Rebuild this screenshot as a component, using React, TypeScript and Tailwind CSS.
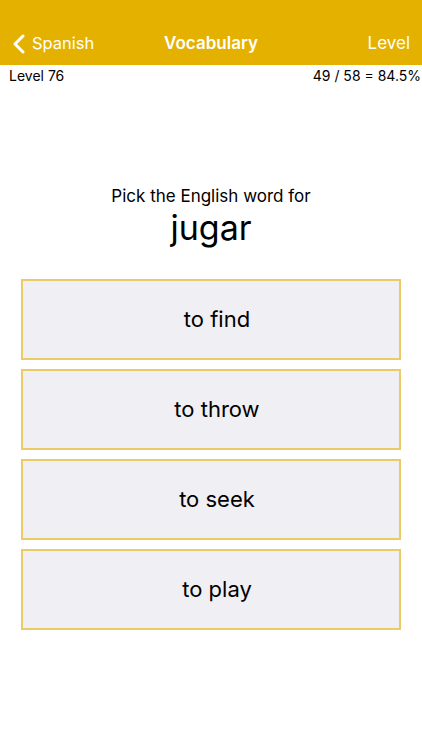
import React from 'react';

const choices = ['to find', 'to throw', 'to seek', 'to play'];

const font = { fontFamily: 'Inter, "Noto Sans", sans-serif' };

export default function App() {
  return (
    <div className="flex min-h-[750px] w-[422px] flex-col bg-white text-black" style={font}>
      <div className="flex h-[65px] items-center bg-[#E5B100] px-3 pt-[22px] text-white">
        <div className="flex flex-1 items-center gap-[6px]">
          <svg width="14" height="20" viewBox="0 0 14 20" fill="none">
            <path d="M11 2 L3 10 L11 18" stroke="white" strokeWidth="3" strokeLinecap="round" strokeLinejoin="round" />
          </svg>
          <span className="text-[16.5px]">Spanish</span>
        </div>
        <span className="text-[17px] font-semibold">Vocabulary</span>
        <div className="flex flex-1 justify-end">
          <span className="text-[17px]">Level</span>
        </div>
      </div>

      <div className="flex h-[21px] items-center justify-between pl-[9px] pr-[1px] text-[14px]">
        <span>Level 76</span>
        <span>49 / 58 = 84.5%</span>
      </div>

      <div className="mt-[99px] flex flex-col items-center">
        <p className="text-[17px] leading-[22px]">Pick the English word for</p>
        <p className="text-[34px] leading-[42px]">jugar</p>
      </div>

      <div className="mt-[30px] flex flex-col gap-[9px] px-[21px]">
        {choices.map((c) => (
          <button
            key={c}
            type="button"
            className="flex h-[81px] items-center justify-center border-2 border-[#EBCB66] bg-[#EFEFF4] pl-3 text-[22px]"
          >
            {c}
          </button>
        ))}
      </div>
    </div>
  );
}
